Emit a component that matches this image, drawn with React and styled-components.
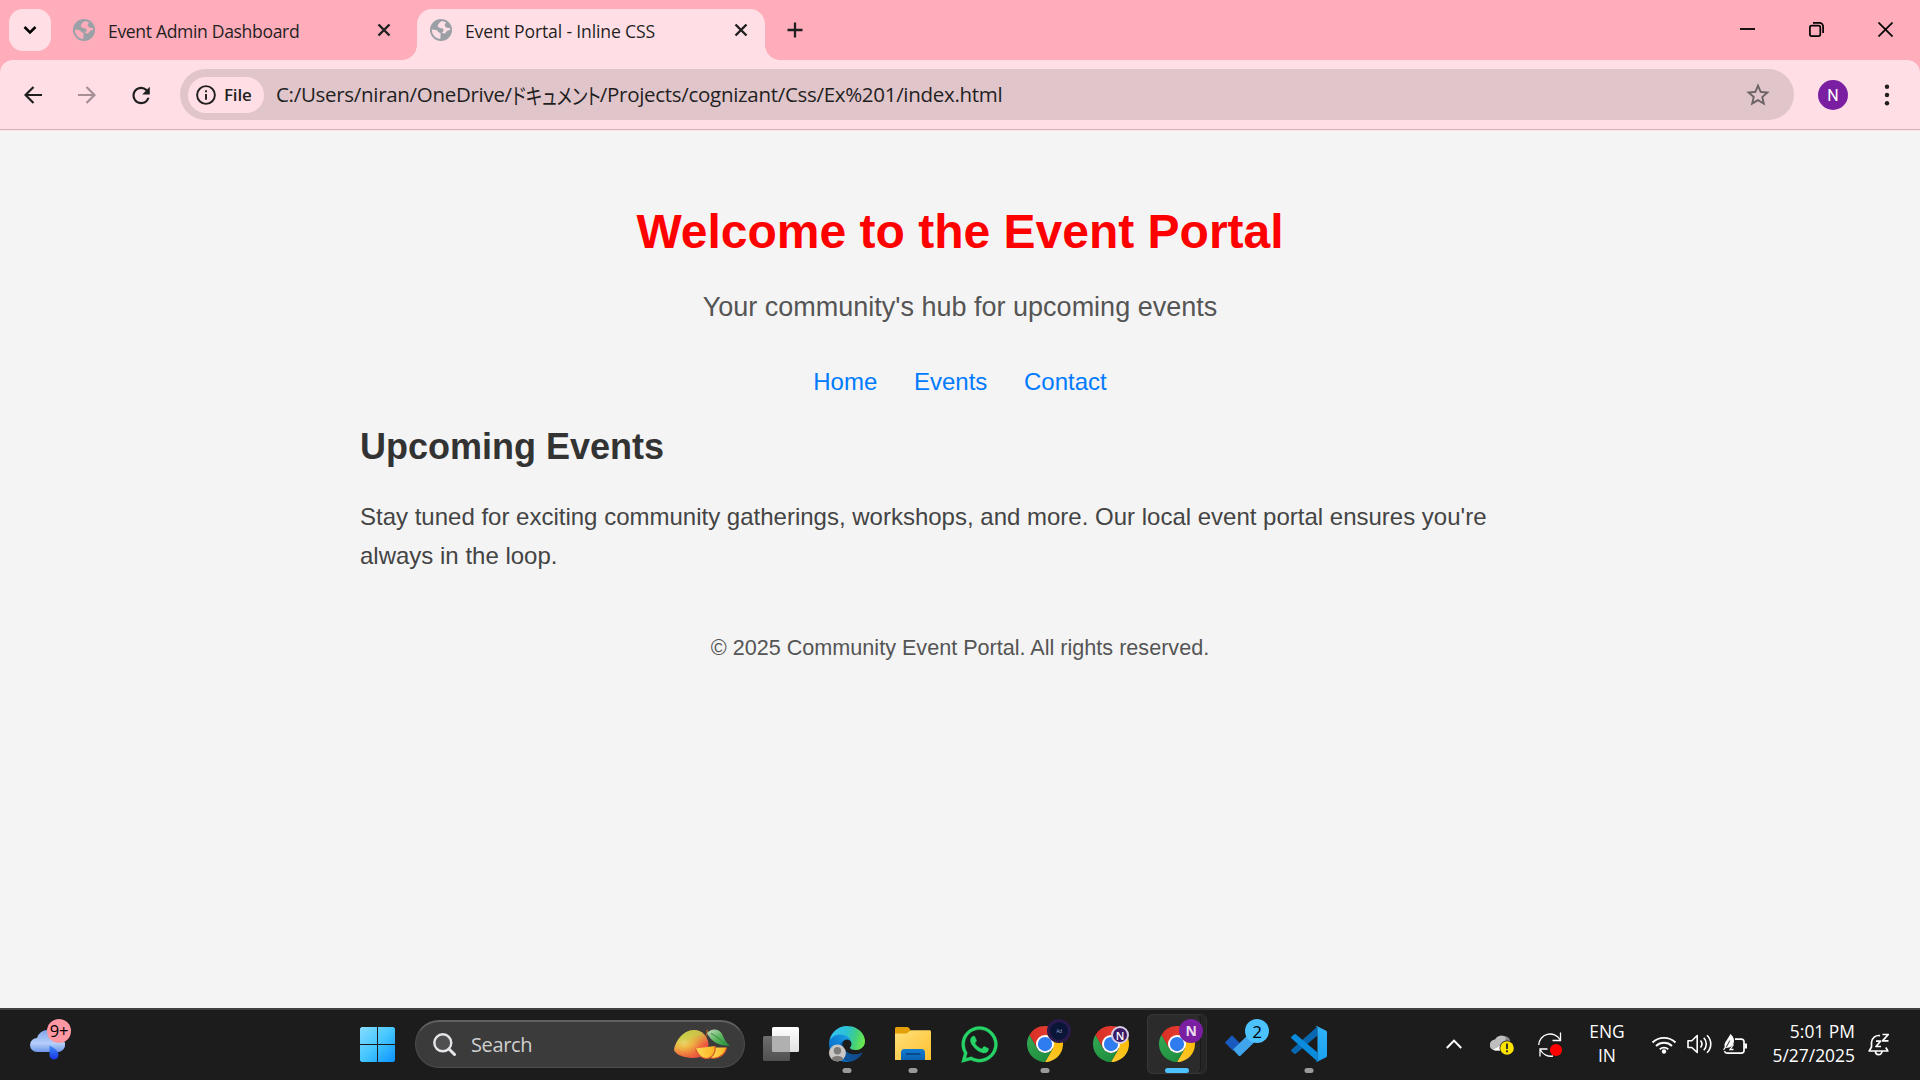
import React from 'react';
import styled, { createGlobalStyle, css } from 'styled-components';
import { FaWhatsapp } from 'react-icons/fa';
import { MdStarBorder, MdRefresh } from 'react-icons/md';

const ui = "'Open Sans', 'Noto Sans', 'Noto Sans CJK JP', sans-serif";
const arial = "'Liberation Sans', Arial, sans-serif";

const GlobalStyle = createGlobalStyle`
  *, *::before, *::after { box-sizing: border-box; }
  body { margin: 0; background: #f4f4f4; overflow: hidden; }
  svg { display: block; flex: none; }
`;

const Screen = styled.div`
  width: 1920px;
  height: 1080px;
  display: flex;
  flex-direction: column;
  font-family: ${ui};
  color: #1f1f1f;
`;

/* ---------- browser chrome ---------- */

const TabStrip = styled.div`
  height: 60px;
  flex: none;
  display: flex;
  background: #ffadbb;
  padding: 9px 27px 0 9px;
`;

const TabSearch = styled.button`
  width: 42px;
  height: 42px;
  border: 0;
  padding: 0;
  border-radius: 14px;
  background: #ffdfe5;
  display: grid;
  place-items: center;
`;

const Tab = styled.div`
  position: relative;
  width: ${(p) => (p.$active ? 348 : 345)}px;
  margin-left: ${(p) => (p.$active ? 0 : 21)}px;
  height: 51px;
  display: flex;
  align-items: center;
  padding: ${(p) => (p.$active ? '0 17px 9px 12px' : '0 26px 9px 0')};
  border-radius: 15px 15px 0 0;
  ${(p) =>
    p.$active &&
    css`
      background: #ffdfe5;
      &::before,
      &::after {
        content: '';
        position: absolute;
        bottom: 0;
        width: 15px;
        height: 15px;
      }
      &::before {
        left: -15px;
        background: radial-gradient(circle at 0 0, transparent 14.5px, #ffdfe5 15.2px);
      }
      &::after {
        right: -15px;
        background: radial-gradient(circle at 100% 0, transparent 14.5px, #ffdfe5 15.2px);
      }
    `}
`;

const TabTitle = styled.span`
  flex: 1;
  margin-left: 12px;
  font-size: 17.6px;
  line-height: 24px;
  letter-spacing: ${(p) => p.$ls}px;
  white-space: nowrap;
  padding-top: 2px;
`;

const NewTab = styled.div`
  width: 60px;
  height: 42px;
  display: grid;
  place-items: center;
`;

const WindowControls = styled.div`
  margin-left: auto;
  height: 41px;
  display: flex;
  align-items: center;
  gap: 54px;
`;

const ToolbarBacking = styled.div`
  flex: none;
  background: #ffadbb;
`;

const Toolbar = styled.div`
  height: 71px;
  display: flex;
  align-items: center;
  padding: 0 21px 1px 21px;
  background: #ffdfe5;
  border-radius: 13px 13px 0 0;
  box-shadow: inset 0 -1px #fbe5e9, inset 0 -2px #d3b2b9;
`;

const NavButton = styled.div`
  width: 24px;
  height: 24px;
  margin-right: 30px;
  display: grid;
  place-items: center;
  color: ${(p) => (p.$dim ? '#a58f95' : '#1f1f1f')};
`;

const Omnibox = styled.div`
  width: 1614px;
  height: 51px;
  margin: 0 0 1px -3px;
  border-radius: 26px;
  background: #e0c5ca;
  display: flex;
  align-items: center;
  padding: 0 22px 0 8px;
`;

const SchemeChip = styled.div`
  width: 76px;
  height: 36px;
  border-radius: 18px;
  background: #ffdfe5;
  display: flex;
  align-items: center;
  padding-left: 8px;
  gap: 8px;
  font-size: 17px;
  line-height: 22px;
  font-weight: 600;
  letter-spacing: -0.2px;
`;

const Url = styled.span`
  flex: 1;
  margin-left: 12px;
  display: flex;
  align-items: center;
  font-size: 20.5px;
  line-height: 28px;
  letter-spacing: -0.3px;
  white-space: nowrap;
  padding-bottom: 1px;
`;

const Kana = styled.span`
  display: inline-block;
  width: 88px;
  font-family: 'Noto Sans CJK JP', sans-serif;
  font-size: 22px;
  font-feature-settings: 'palt';
  letter-spacing: 0;
  transform: scaleX(0.79);
  transform-origin: left center;
`;

const Avatar = styled.div`
  width: 30px;
  height: 30px;
  margin-left: 24px;
  border-radius: 50%;
  background: #7b1fa2;
  color: #fff;
  display: grid;
  place-items: center;
  font-family: Roboto, sans-serif;
  font-size: 16px;
`;

const Menu = styled.div`
  width: 24px;
  margin-left: 27px;
  display: grid;
  place-items: center;
`;

/* ---------- page ---------- */

const Page = styled.main`
  flex: 1;
  background: #f4f4f4;
  font-family: ${arial};
  color: #333;
  padding-top: 73px;
`;

const Title = styled.h1`
  margin: 0;
  text-align: center;
  font-size: 48px;
  line-height: 56px;
  color: #f00;
`;

const Tagline = styled.p`
  margin: 31px 0 0;
  text-align: center;
  font-size: 27px;
  line-height: 32px;
  color: #555;
`;

const Links = styled.nav`
  margin-top: 45px;
  display: flex;
  justify-content: center;
  gap: 36.67px;
  font-size: 24px;
  line-height: 28px;
`;

const PageLink = styled.a`
  color: #007bff;
  text-decoration: none;
`;

const Section = styled.section`
  width: 1200px;
  margin: 30px auto 0;
`;

const SectionTitle = styled.h2`
  margin: 0;
  font-size: 36px;
  line-height: 42px;
  color: #333;
`;

const Copy = styled.p`
  margin: 29px 0 0;
  font-size: 24px;
  line-height: 39px;
  color: #444;
`;

const Footer = styled.footer`
  margin-top: 60px;
  text-align: center;
  font-size: 21.6px;
  line-height: 26px;
  color: #555;
`;

/* ---------- taskbar ---------- */

const Taskbar = styled.div`
  height: 72px;
  flex: none;
  display: flex;
  align-items: center;
  background: #1c1c1c;
  border-top: 2px solid #404040;
  color: #fff;
`;

const Slot = styled.div`
  position: relative;
  width: ${(p) => p.$w || 66}px;
  height: 70px;
  flex: none;
  display: grid;
  place-items: center;
  padding-bottom: 2px;
  margin-left: ${(p) => p.$ml || 0}px;
`;

const Indicator = styled.span`
  position: absolute;
  bottom: 7px;
  left: 50%;
  transform: translateX(-50%);
  width: ${(p) => (p.$active ? 24 : 9)}px;
  height: 5px;
  border-radius: 2.5px;
  background: ${(p) => (p.$active ? '#4cc2ff' : '#9a9a9a')};
`;

const ActiveStack = styled.span`
  position: absolute;
  left: 3px;
  top: 4px;
  width: 60px;
  height: 60px;
  border-radius: 6px;
  background: #262626;
  border: 1px solid #303030;
  &::after {
    content: '';
    position: absolute;
    left: -1px;
    top: -1px;
    width: 54px;
    height: 60px;
    border-radius: 6px;
    background: #2b2b2b;
    border: 1px solid #383838;
    border-right-color: #1a1a1a;
  }
`;

const Glyph = styled.span`
  position: relative;
  display: block;
`;

const Badge = styled.span`
  position: absolute;
  left: ${(p) => p.$x}px;
  top: ${(p) => p.$y}px;
  width: ${(p) => p.$size}px;
  height: ${(p) => p.$size}px;
  border-radius: 50%;
  background: ${(p) => p.$bg};
  color: ${(p) => p.$fg};
  border: ${(p) => p.$border || '0'};
  display: flex;
  align-items: center;
  justify-content: center;
  font-size: ${(p) => p.$font}px;
  font-weight: ${(p) => p.$weight || 400};
  line-height: 1;
  letter-spacing: -0.3px;
`;

const SearchPill = styled.div`
  width: 330px;
  height: 48px;
  margin: 0 3px 2px 5px;
  border-radius: 24px;
  background: #3b3b3b;
  border: 1px solid #4c4c4c;
  border-top: 2px solid #606060;
  display: flex;
  align-items: center;
  padding: 0 14px 0 17px;
`;

const SearchLabel = styled.span`
  flex: 1;
  margin-left: 15px;
  font-size: 20px;
  line-height: 28px;
  letter-spacing: -0.35px;
  color: #d0d0d0;
`;

const Tray = styled.div`
  margin-left: auto;
  display: flex;
  align-items: center;
  height: 70px;
  padding: 0 30px 2px 0;
`;

const Item = styled.div`
  margin-right: ${(p) => p.$gap}px;
`;

const Lines = styled.div`
  width: ${(p) => p.$w}px;
  text-align: ${(p) => p.$align};
  font-size: 17.4px;
  line-height: 24px;
  letter-spacing: ${(p) => p.$ls || 0}px;
  margin-right: ${(p) => p.$gap}px;
  padding-bottom: 2px;
  white-space: nowrap;
`;

/* ---------- drawings ---------- */

const stroke = { fill: 'none', stroke: 'currentColor' };

const Globe = ({ land }) => (
  <svg width="24" height="24" viewBox="0 0 24 24">
    <circle cx="12" cy="12" r="11" fill="#9aa0a6" />
    <path fill={land} d="M2.800 11.500L7.500 12l2 2 2.200 1.600-.4 5.500A9.300 9.300 0 0 1 2.800 11.500z" />
    <path fill={land} d="M13 2.900C10 4.600 8.600 6.500 8.800 8.800l2.700 1.500 2.600.2.500 2.500-1.900 1.500 3.200 1.300 2-2.800 3.400-1.200-.3-1.600-3.800-.6-1.700-2.400L17 4.300z" />
  </svg>
);

const Cross = () => (
  <svg width="14" height="14" viewBox="0 0 14 14" {...stroke} strokeWidth="2.400">
    <path d="M1.500 1.500l11 11M12.500 1.500l-11 11" />
  </svg>
);

const ChromeLogo = ({ id }) => (
  <svg width="36" height="36" viewBox="0 0 48 48">
    <defs>
      <linearGradient id={`${id}r`} x1="3" y1="15" x2="45" y2="15" gradientUnits="userSpaceOnUse">
        <stop offset="0" stopColor="#d93025" /><stop offset="1" stopColor="#ea4335" />
      </linearGradient>
      <linearGradient id={`${id}y`} x1="21" y1="48" x2="38" y2="16" gradientUnits="userSpaceOnUse">
        <stop offset="0" stopColor="#fcc934" /><stop offset="1" stopColor="#fbbc04" />
      </linearGradient>
      <linearGradient id={`${id}g`} x1="27" y1="46" x2="6" y2="10" gradientUnits="userSpaceOnUse">
        <stop offset="0" stopColor="#1e8e3e" /><stop offset="1" stopColor="#34a853" />
      </linearGradient>
    </defs>
    <path fill={`url(#${id}r)`} d="M24 12h20.780A24 24 0 0 0 3.210 12l10.400 18L24 12z" />
    <path fill={`url(#${id}y)`} d="M34.390 30L24 48a24 24 0 0 0 20.780-36H24l10.390 18z" />
    <path fill={`url(#${id}g)`} d="M13.610 30L3.220 12A24 24 0 0 0 24 48l10.390-18a12 12 0 0 1-20.780 0z" />
    <circle cx="24" cy="24" r="12" fill="#fff" />
    <circle cx="24" cy="24" r="9.500" fill="#2f7bf0" />
  </svg>
);

const EdgeLogo = () => (
  <svg width="36" height="36" viewBox="0 0 256 256">
    <defs>
      <linearGradient id="e1" x1="63" y1="178" x2="241" y2="178" gradientUnits="userSpaceOnUse">
        <stop offset="0" stopColor="#0c59a4" /><stop offset="1" stopColor="#114a8b" />
      </linearGradient>
      <linearGradient id="e2" x1="157" y1="100" x2="46" y2="222" gradientUnits="userSpaceOnUse">
        <stop offset="0" stopColor="#1b9de2" /><stop offset=".5" stopColor="#0f7fd6" /><stop offset="1" stopColor="#0a6fc4" />
      </linearGradient>
      <linearGradient id="e3" x1="20" y1="60" x2="250" y2="120" gradientUnits="userSpaceOnUse">
        <stop offset="0" stopColor="#35c1f1" /><stop offset=".45" stopColor="#2bc3d2" />
        <stop offset=".75" stopColor="#45d07a" /><stop offset="1" stopColor="#6be84f" />
      </linearGradient>
    </defs>
    <g transform="translate(-4.63 -4.92)">
      <path fill="url(#e1)" d="M235.68 195.46a93.73 93.73 0 0 1-10.54 4.71 101.87 101.87 0 0 1-35.9 6.46c-47.32 0-88.54-32.55-88.54-74.32A31.48 31.48 0 0 1 117.13 105c-42.8 1.8-53.8 46.4-53.8 72.53 0 73.88 68.09 81.37 82.76 81.37 7.91 0 19.84-2.3 27-4.56l1.31-.44a128.34 128.34 0 0 0 66.6-52.8 4 4 0 0 0-5.32-5.64Z" />
      <path fill="url(#e2)" d="M110.34 246.34A79.2 79.2 0 0 1 87.6 225a80.72 80.72 0 0 1 29.53-120c3.12-1.47 8.45-4.13 15.54-4a32.35 32.35 0 0 1 25.69 13 31.88 31.88 0 0 1 6.36 18.66c0-.21 24.46-79.6-80-79.6-43.9 0-80 41.66-80 78.21a130.15 130.15 0 0 0 12.11 56 128 128 0 0 0 156.38 67.11 75.55 75.55 0 0 1-62.78-8Z" />
      <path fill="url(#e3)" d="M156.94 153.78c-.81 1.05-3.3 2.5-3.3 5.66 0 2.61 1.7 5.12 4.72 7.23 14.38 10 41.49 8.68 41.56 8.68a59.56 59.56 0 0 0 30.27-8.35 61.38 61.38 0 0 0 30.43-52.88c.26-22.41-8-37.31-11.34-43.91C228.09 28.76 182.35 4.92 132.61 4.92a128 128 0 0 0-128 126.2c.48-36.54 36.8-66.05 80-66.05 3.5 0 23.46.34 42 10.07 16.34 8.58 24.9 18.94 30.85 29.21 6.18 10.67 7.28 24.15 7.28 29.52s-2.74 13.33-7.8 19.91Z" />
    </g>
    <circle cx="60" cy="192" r="60" fill="#c9c7c5" />
    <circle cx="60" cy="176" r="26" fill="#7d7a78" />
    <path fill="#7d7a78" d="M20 236c0-30 80-30 80 0a60 60 0 0 1-80 0z" />
  </svg>
);

const FolderLogo = () => (
  <svg width="36" height="34" viewBox="0 0 36 34">
    <defs>
      <linearGradient id="f1" x1="0" y1="0" x2="1" y2="1">
        <stop offset="0" stopColor="#ffe07a" /><stop offset="1" stopColor="#fdc02f" />
      </linearGradient>
      <linearGradient id="f2" x1="0" y1="0" x2="0" y2="1">
        <stop offset="0" stopColor="#0f7bd4" /><stop offset="1" stopColor="#0c62b0" />
      </linearGradient>
    </defs>
    <path fill="#e3a008" d="M0 1.500C0 .7.7 0 1.500 0H12c1 0 1.500.4 2.200 1.200L16 4v6H0z" />
    <path fill="url(#f1)" d="M0 6.500h10.500c1.200 0 1.800-.3 2.600-1.200L15 4c.6-.6 1-.8 2-.8h17.500c.9 0 1.500.6 1.500 1.500V33H0z" />
    <path fill="url(#f2)" d="M6 33v-7.500c0-2 1.300-3.500 3.300-3.500h17.400c2 0 3.300 1.500 3.300 3.500V33z" />
    <path stroke="#0a4a8c" strokeWidth="1.800" strokeLinecap="round" d="M11.500 27h13" />
  </svg>
);

const CodeLogo = () => (
  <svg width="36" height="36" viewBox="0 0 36 36">
    <defs>
      <linearGradient id="v1" x1="0" y1="0" x2="0" y2="1">
        <stop offset="0" stopColor="#2fb4f7" /><stop offset="1" stopColor="#1a9ff0" />
      </linearGradient>
    </defs>
    <path fill="#0768b0" d="M26.500 9.500v-9L.6 23.400c-.7.6-.7 1.500 0 2.100l2.400 2.100c.5.500 1.200.5 1.800.1z" />
    <path fill="#0a8bdc" d="M26.500 26.500v9L.6 12.600c-.7-.6-.7-1.500 0-2.100L3 8.400c.5-.5 1.200-.5 1.800-.1z" />
    <path fill="url(#v1)" d="M26.200 35.700c-.8.300-1.600 0-2.200-.500.8.700 2.500.200 2.500-1.200V2c0-1.400-1.600-2.100-2.500-1.200.6-.6 1.400-.9 2.200-.5l8.500 4.100c.8.400 1.300 1.100 1.300 2v23.200c0 .9-.5 1.600-1.300 2z" />
  </svg>
);

const CheckLogo = () => (
  <svg width="36" height="26" viewBox="0 0 36 26">
    <path fill="#185abd" d="M7 4.200L.6 10.700c-.6.600-.6 1 0 1.600L8 19.700l8-6.500z" />
    <path fill="#41a5ee" d="M8 18.600L26.500.6l7.500 6.200-18.500 18c-.6.600-1.200.6-1.800 0z" />
  </svg>
);

const StartLogo = () => (
  <svg width="35" height="35" viewBox="0 0 35 35">
    <defs>
      <linearGradient id="w1" x1="0" y1="0" x2="35" y2="35" gradientUnits="userSpaceOnUse">
        <stop offset="0" stopColor="#86dcff" /><stop offset=".5" stopColor="#45c6ff" /><stop offset="1" stopColor="#0a93ff" />
      </linearGradient>
    </defs>
    <path fill="url(#w1)" d="M1.500 0H17v17H0V1.500zM18 0h15.500L35 1.500V17H18zM0 18h17v17H1.500L0 33.500zM18 18h17v15.500L33.500 35H18z" />
  </svg>
);

const WeatherLogo = () => (
  <svg width="38" height="34" viewBox="0 0 38 34">
    <defs>
      <linearGradient id="c1" x1="0" y1="0" x2="0" y2="1">
        <stop offset="0" stopColor="#7fa4ea" /><stop offset=".6" stopColor="#b6d0fa" /><stop offset="1" stopColor="#6f97e8" />
      </linearGradient>
      <linearGradient id="c2" x1="0" y1="0" x2="0" y2="1">
        <stop offset="0" stopColor="#3f8cf5" /><stop offset="1" stopColor="#1735e6" />
      </linearGradient>
    </defs>
    <path fill="url(#c1)" d="M8 25a7 7 0 0 1 0-14A11 11 0 0 1 29 10.500a7.300 7.300 0 0 1 1 14.500z" />
    <path fill="url(#c2)" d="M20.500 18.500c4 2 9 5 9 9.500a4.500 4.500 0 0 1-9 0z" />
  </svg>
);

const MangoLogo = () => (
  <svg width="56" height="31" viewBox="0 0 56 31">
    <defs>
      <radialGradient id="m1" cx=".28" cy=".42" r=".8">
        <stop offset="0" stopColor="#ffe9a0" /><stop offset=".25" stopColor="#f3bb45" /><stop offset=".65" stopColor="#ee6a3c" /><stop offset="1" stopColor="#e8404a" />
      </radialGradient>
      <linearGradient id="m4" x1="0" y1="0" x2=".35" y2="1">
        <stop offset="0" stopColor="#b5cf4d" /><stop offset=".35" stopColor="#c9cf4a" stopOpacity=".85" /><stop offset=".75" stopColor="#eeb040" stopOpacity="0" />
      </linearGradient>
      <linearGradient id="m2" x1="0" y1="0" x2="1" y2="1">
        <stop offset="0" stopColor="#c9dcc5" /><stop offset=".5" stopColor="#5cb45f" /><stop offset="1" stopColor="#1d8f38" />
      </linearGradient>
      <linearGradient id="m3" x1="0" y1="0" x2="1" y2="0">
        <stop offset="0" stopColor="#ffd95a" /><stop offset="1" stopColor="#fbb31f" />
      </linearGradient>
    </defs>
    <path fill="url(#m1)" d="M0 21C1 13 9 1 20 1c8 0 13 6 14.500 13C35 22 31 27 24 28.500 14 30 2 27 0 21z" />
    <path fill="url(#m4)" d="M0 21C1 13 9 1 20 1c8 0 13 6 14.500 13C35 22 31 27 24 28.500 14 30 2 27 0 21z" />
    <path d="M32 7c1.500-2 2-4 1-6" stroke="#9a5a25" strokeWidth="1.800" fill="none" />
    <path fill="url(#m2)" d="M33 4c5-5 11-4 14-.5 3 4 3.500 10 9 13-8 1-18-2-23-12.500z" />
    <path d="M37 4.500c5 2 9 6 14 10.500" stroke="#2f8a3c" strokeWidth="1" fill="none" />
    <path fill="url(#m3)" d="M38 18.500l14.500 0c-1 6-7 12-15.500 10.500z" />
    <path stroke="#d9542b" strokeWidth="1.200" fill="none" d="M52.500 18.500c-1 6-7 12-15.500 10.500" />
    <path fill="url(#m3)" d="M21.500 19.500l19.500-2.500c1 7-3 12.500-9 12.500-5 0-9-5-10.500-10z" />
    <path stroke="#d9542b" strokeWidth="1.200" fill="none" d="M41 17c1 7-3 12.500-9 12.500-5 0-9-5-10.500-10" />
  </svg>
);

const TaskViewLogo = () => (
  <svg width="36" height="34" viewBox="0 0 36 34">
    <defs>
      <linearGradient id="t1" x1="0" y1="0" x2="0" y2="1"><stop offset="0" stopColor="#fff" /><stop offset="1" stopColor="#e2e2e2" /></linearGradient>
      <linearGradient id="t2" x1="0" y1="0" x2="0" y2="1"><stop offset="0" stopColor="#6e6e6e" /><stop offset="1" stopColor="#505050" /></linearGradient>
    </defs>
    <rect x="9" width="27" height="25" rx="1.500" fill="url(#t1)" />
    <rect y="9" width="27" height="25" rx="1.500" fill="url(#t2)" />
    <path d="M9 9h16.500a1.500 1.500 0 0 1 1.500 1.500V25H10.500A1.500 1.500 0 0 1 9 23.500z" fill="#b0b0b0" />
  </svg>
);

export default function App() {
  return (
    <Screen>
      <GlobalStyle />
      <TabStrip>
        <TabSearch>
          <svg width="14" height="10" viewBox="0 0 14 10" {...stroke} strokeWidth="2.500"><path d="M1.500 2L7 7.500 12.500 2" /></svg>
        </TabSearch>
        <Tab>
          <Globe land="#ffadbb" />
          <TabTitle $ls={-0.36}>Event Admin Dashboard</TabTitle>
          <Cross />
        </Tab>
        <Tab $active>
          <Globe land="#ffdfe5" />
          <TabTitle $ls={-0.16}>Event Portal - Inline CSS</TabTitle>
          <Cross />
        </Tab>
        <NewTab>
          <svg width="16" height="16" viewBox="0 0 16 16" {...stroke} strokeWidth="2.300"><path d="M8 .5v15M.5 8h15" /></svg>
        </NewTab>
        <WindowControls>
          <svg width="15" height="15" viewBox="0 0 15 15" {...stroke} stroke="#000" strokeWidth="1.800"><path d="M0 7h15" /></svg>
          <svg width="15" height="15" viewBox="0 0 15 15" {...stroke} stroke="#000" strokeWidth="1.700">
            <rect x=".9" y="3.700" width="10.400" height="10.400" rx="1.800" />
            <path d="M4 .9h6.500a3.600 3.600 0 0 1 3.600 3.600V11" />
          </svg>
          <svg width="15" height="15" viewBox="0 0 15 15" {...stroke} stroke="#000" strokeWidth="1.700"><path d="M.5.5l14 14M14.500.5l-14 14" /></svg>
        </WindowControls>
      </TabStrip>

      <ToolbarBacking>
        <Toolbar>
          <NavButton>
            <svg width="18" height="18" viewBox="0 0 18 18" {...stroke} strokeWidth="2.200"><path d="M18 9H1.800M9.500 1L1.500 9l8 8" /></svg>
          </NavButton>
          <NavButton $dim>
            <svg width="18" height="18" viewBox="0 0 18 18" {...stroke} strokeWidth="2.200"><path d="M0 9h16.200M8.500 1l8 8-8 8" /></svg>
          </NavButton>
          <NavButton><MdRefresh size={26} viewBox="0.8 0.5 24 24" /></NavButton>
          <Omnibox>
            <SchemeChip>
              <svg width="20" height="20" viewBox="0 0 20 20" {...stroke} strokeWidth="1.900">
                <circle cx="10" cy="10" r="8.900" />
                <path d="M10 9v5.800M10 5.200v2" />
              </svg>
              File
            </SchemeChip>
            <Url>
              <span>C:/Users/niran/OneDrive/</span>
              <Kana>ドキュメント</Kana>
              <span>/Projects/cognizant/Css/Ex%201/index.html</span>
            </Url>
            <MdStarBorder size={28} color="#6b6264" />
          </Omnibox>
          <Avatar>N</Avatar>
          <Menu>
            <svg width="6" height="22" viewBox="0 0 6 22" fill="#1f1f1f">
              <circle cx="3" cy="2.700" r="2.200" /><circle cx="3" cy="11" r="2.200" /><circle cx="3" cy="19.300" r="2.200" />
            </svg>
          </Menu>
        </Toolbar>
      </ToolbarBacking>

      <Page>
        <Title>Welcome to the Event Portal</Title>
        <Tagline>Your community's hub for upcoming events</Tagline>
        <Links>
          <PageLink>Home</PageLink>
          <PageLink>Events</PageLink>
          <PageLink>Contact</PageLink>
        </Links>
        <Section>
          <SectionTitle>Upcoming Events</SectionTitle>
          <Copy>
            Stay tuned for exciting community gatherings, workshops, and more. Our local event portal ensures you're always in the loop.
          </Copy>
        </Section>
        <Footer>© 2025 Community Event Portal. All rights reserved.</Footer>
      </Page>

      <Taskbar>
        <Slot $w={48} $ml={24}>
          <Glyph>
            <WeatherLogo />
            <Badge $x={18} $y={-8} $size={24} $bg="#ff98a2" $fg="#000" $font={16.5}>9+</Badge>
          </Glyph>
        </Slot>
        <Slot $ml={272}><StartLogo /></Slot>
        <SearchPill>
          <svg width="23" height="23" viewBox="0 0 23 23" fill="none" stroke="#e6e6ea" strokeWidth="2.400">
            <circle cx="9.800" cy="9.800" r="8.500" fill="#505050" />
            <path d="M16 16l5.500 5.500" strokeWidth="3" strokeLinecap="round" />
          </svg>
          <SearchLabel>Search</SearchLabel>
          <MangoLogo />
        </SearchPill>
        <Slot><TaskViewLogo /></Slot>
        <Slot><EdgeLogo /><Indicator /></Slot>
        <Slot><FolderLogo /><Indicator /></Slot>
        <Slot><FaWhatsapp size={41} color="#25d366" stroke="#25d366" strokeWidth="5" /></Slot>
        <Slot>
          <Glyph>
            <ChromeLogo id="a" />
            <Badge $x={20} $y={-7} $size={24} $bg="#0a1638" $fg="#8fa0c8" $border="3px solid #2b1b4d" $font={5}>Ad</Badge>
          </Glyph>
          <Indicator />
        </Slot>
        <Slot>
          <Glyph>
            <ChromeLogo id="b" />
            <Badge $x={18} $y={0} $size={18} $bg="#3a1a66" $fg="#fff" $border="2px solid #d8cfe6" $font={11} $weight={600}>N</Badge>
          </Glyph>
        </Slot>
        <Slot>
          <ActiveStack />
          <Glyph>
            <ChromeLogo id="c" />
            <Badge $x={20} $y={-7} $size={24} $bg="#7b1fa2" $fg="#eadcf0" $font={14} $weight={700}>N</Badge>
          </Glyph>
          <Indicator $active />
        </Slot>
        <Slot>
          <Glyph>
            <CheckLogo />
            <Badge $x={20} $y={-12} $size={24} $bg="#4cc2ff" $fg="#000" $font={17}>2</Badge>
          </Glyph>
        </Slot>
        <Slot><CodeLogo /><Indicator /></Slot>

        <Tray>
          <Item $gap={28}>
            <svg width="16" height="10" viewBox="0 0 16 10" {...stroke} strokeWidth="2"><path d="M.8 9L8 1.600 15.200 9" /></svg>
          </Item>
          <Item $gap={24}>
            <svg width="24" height="22" viewBox="0 0 24 22">
              <path d="M8 5a7 6 0 0 1 12 2l1 5H9z" fill="#8a8a8a" />
              <path d="M5.500 17.500A5.500 5.500 0 0 1 5 6.500 6.500 6.500 0 0 1 16 5l-4 12.500z" fill="#bdbdbd" />
              <path d="M3 16.800L12 12v5.500H5.500z" fill="#fff" />
              <circle cx="17" cy="15" r="7.500" fill="#1c1c1c" />
              <circle cx="17" cy="15" r="6.800" fill="#fde300" />
              <path d="M17 10.500v5.500M17 17.300v2" stroke="#222" strokeWidth="1.800" />
            </svg>
          </Item>
          <Item $gap={24}>
            <svg width="25" height="25" viewBox="0 0 25 25" {...stroke} strokeWidth="1.300">
              <path d="M.7 13A11.500 11.500 0 0 1 22 7.500M22.500.5v8h-8M2 24.500v-7.500h7.500M2.500 18A11.500 11.500 0 0 0 15 24" />
              <circle cx="18" cy="18" r="6.100" fill="#f00" stroke="none" />
            </svg>
          </Item>
          <Lines $w={40} $align="center" $gap={24}>ENG<br />IN</Lines>
          <Item $gap={10}>
            <svg width="26" height="19" viewBox="0 0 26 19" {...stroke} strokeWidth="1.800">
              <path d="M1.500 7.500a16.500 16.500 0 0 1 23 0M5 11a11.500 11.500 0 0 1 16 0M8.700 14.400a6.300 6.300 0 0 1 8.600 0" />
              <circle cx="13" cy="16.500" r="2.200" fill="#fff" stroke="none" />
            </svg>
          </Item>
          <Item $gap={11}>
            <svg width="25" height="20" viewBox="0 0 25 20" {...stroke} strokeWidth="1.600" strokeLinejoin="round">
              <path d="M1 6.800h3.800L10.200 1.500v17L4.800 13.500H1zM13.500 6.500c1.700 2 1.700 5 0 7M16.800 3.800c3.300 3.700 3.300 8.700 0 12.400M20 1.200c5 5 5 12.600 0 17.600" />
            </svg>
          </Item>
          <Item $gap={23}>
            <svg width="25" height="21" viewBox="0 0 25 21">
              <path d="M12 5.200h6.500a2.500 2.500 0 0 1 2.500 2.500v9a2.500 2.500 0 0 1-2.500 2.500H4a2.500 2.500 0 0 1-2.400-2" fill="none" stroke="#fff" strokeWidth="1.700" />
              <path d="M21.500 9.500H24v5h-2.500z" fill="#fff" />
              <path d="M7.500 0c3.500 3 4.500 7 2.500 10.500-1.500 2.500-4.500 3.800-7 3L.8 16.500.2 15.500 1.700 13C.5 9 4 6.500 7.500 0z" fill="#fff" />
              <path d="M6.500 6.500L3.500 13.500M10.500 10.500L7 15.500h3.500" stroke="#fff" strokeWidth="1.300" fill="none" />
              <path d="M6.800 6.500L3.400 13" stroke="#1c1c1c" strokeWidth=".9" fill="none" />
            </svg>
          </Item>
          <Lines $w={84} $align="right" $gap={13} $ls={0.02}>5:01 PM<br />5/27/2025</Lines>
          <svg width="22" height="23" viewBox="0 0 22 23" {...stroke} strokeWidth="1.700" strokeLinejoin="round">
            <path d="M12 2.600A7.300 7.300 0 0 0 3.500 9.500v4.500l-2.300 4h18.600l-2-3.500M7.500 18.500a3.200 3.200 0 0 0 6.400 0" />
            <path d="M14.500 1.500h5.800l-5.800 6.300h6M8 8.200h4.500L8 13.500h5" />
          </svg>
        </Tray>
      </Taskbar>
    </Screen>
  );
}
